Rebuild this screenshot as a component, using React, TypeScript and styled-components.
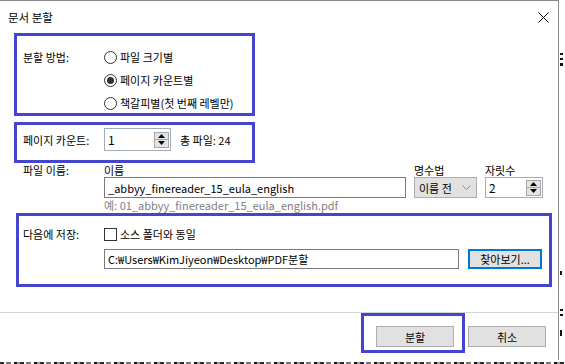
import React from "react";
import styled, { createGlobalStyle } from "styled-components";

const GlobalStyle = createGlobalStyle`
  html, body {
    margin: 0;
    padding: 0;
    background: #fff;
  }
  body {
    font-family: "Noto Sans CJK KR", "Noto Sans", sans-serif;
    font-size: 11px;
    color: #000;
  }
  * {
    box-sizing: border-box;
  }
`;

const Screen = styled.div`
  width: 565px;
  height: 364px;
  display: flex;
  flex-direction: column;
  overflow: hidden;
`;

const Top = styled.div`
  display: flex;
  height: 360px;
`;

const Dialog = styled.div`
  width: 559px;
  height: 360px;
  display: flex;
  flex-direction: column;
  background: #fff;
  border-top: 1px solid #8a8a8a;
  border-right: 1px solid #8a8a8a;
`;

const Backdrop = styled.div`
  flex: 1;
  display: flex;
  flex-direction: column;
  padding-left: 1px;
`;

const Mark = styled.span<{ $mt: number; $w?: number; $h?: number }>`
  display: block;
  margin-top: ${(p) => p.$mt}px;
  width: ${(p) => p.$w ?? 3}px;
  height: ${(p) => p.$h ?? 2}px;
  background: #111;
`;

const BottomStrip = styled.div`
  height: 4px;
  background: repeating-linear-gradient(
    90deg,
    #2a2a2a 0 4px,
    #fff 4px 6px,
    #777 6px 11px,
    #fff 11px 14px,
    #111 14px 17px,
    #9a9a9a 17px 20px
  );
  background-size: 100% 2px;
  background-repeat: no-repeat;
  background-position: 0 2px;
`;

const TitleBar = styled.div`
  height: 32px;
  display: flex;
  align-items: center;
  justify-content: space-between;
  padding: 0 9px 0 8px;
`;

const Title = styled.span`
  font-size: 11.5px;
  line-height: 14px;
`;

const CloseIcon = styled.svg`
  width: 11px;
  height: 11px;
`;

const Label = styled.span`
  line-height: 20px;
  white-space: nowrap;
`;

const Highlight = styled.div`
  border: 3px solid #4444cc;
`;

const MethodBox = styled(Highlight)`
  margin-left: 14px;
  width: 241px;
  height: 83px;
  padding: 11px 0 0 6px;
  display: grid;
  grid-template-columns: 81px auto;
  align-items: start;
`;

const RadioList = styled.div`
  display: flex;
  flex-direction: column;
  gap: 3px;
`;

const OptionRow = styled.label`
  height: 20px;
  display: flex;
  align-items: center;
  gap: 3px;
  white-space: nowrap;
`;

const RadioDot = styled.span<{ $on?: boolean }>`
  width: 13px;
  height: 13px;
  border: 1px solid #333;
  border-radius: 50%;
  background: #fff;
  display: inline-flex;
  align-items: center;
  justify-content: center;
  flex: none;

  &::after {
    content: "";
    width: 7px;
    height: 7px;
    border-radius: 50%;
    background: ${(p) => (p.$on ? "#333" : "transparent")};
  }
`;

const CheckBox = styled.span`
  width: 13px;
  height: 13px;
  border: 1px solid #333;
  background: #fff;
  flex: none;
`;

const CountBox = styled(Highlight)`
  margin: 6px 0 0 14px;
  width: 241px;
  height: 41px;
  padding: 0 0 6px 6px;
  display: flex;
  align-items: center;
`;

const LabelCell = styled.div`
  width: 81px;
  flex: none;
`;

const Total = styled.span`
  margin-left: 9px;
  white-space: nowrap;
`;

const SpinBox = styled.div<{ $w: number; $h: number }>`
  width: ${(p) => p.$w}px;
  height: ${(p) => p.$h}px;
  border: 1px solid #a3adb8;
  background: #fff;
  display: flex;
  align-items: center;
  justify-content: space-between;
  padding: 0 1px 0 3px;
`;

const SpinValue = styled.span`
  font-size: 12px;
`;

const SpinButtons = styled.div`
  display: flex;
  flex-direction: column;
`;

const SpinButton = styled.span`
  width: 15px;
  height: 8px;
  background: #e4e4e4;
  border: 1px solid #a6a6a6;
  display: flex;
  align-items: center;
  justify-content: center;

  & + & {
    border-top: none;
  }
`;

const Arrow = styled.svg`
  width: 7px;
  height: 4px;
`;

const FileSection = styled.div`
  height: 50px;
  padding-left: 23px;
  display: grid;
  grid-template-columns: 73px 302px 63px 58px;
  grid-template-rows: 14px 21px 15px;
  column-gap: 8px;
  align-items: center;
`;

const ColHead = styled.span`
  line-height: 14px;
  white-space: nowrap;
`;

const TextField = styled.div<{ $w?: number }>`
  width: ${(p) => (p.$w ? `${p.$w}px` : "100%")};
  height: 100%;
  border: 1px solid #7a7a7a;
  background: #fff;
  padding-left: 3px;
  display: flex;
  align-items: center;
  white-space: nowrap;
  overflow: hidden;
`;

const Select = styled.div`
  height: 100%;
  background: #e1e1e1;
  border: 1px solid #adadad;
  display: flex;
  align-items: center;
  justify-content: space-between;
  padding: 0 5px 0 4px;
  white-space: nowrap;
`;

const Chevron = styled.svg`
  width: 9px;
  height: 5px;
`;

const Hint = styled.span`
  grid-column: 2 / 5;
  color: #808080;
  line-height: 15px;
  white-space: nowrap;
`;

const SaveBox = styled(Highlight)`
  margin-left: 16px;
  width: 536px;
  height: 74px;
  padding: 10px 0 0 4px;
  display: grid;
  grid-template-columns: 81px 1fr;
  grid-template-rows: 16px 20px;
  row-gap: 7px;
  align-items: center;
`;

const PathRow = styled.div`
  grid-column: 2;
  display: flex;
  gap: 9px;
  height: 20px;
`;

const Button = styled.button`
  width: 78px;
  height: 21px;
  padding: 0;
  background: #e1e1e1;
  border: 1px solid #adadad;
  font: inherit;
  color: #000;
`;

const BrowseButton = styled(Button)`
  width: 74px;
  height: 20px;
  border: 2px solid #0078d7;
`;

const Footer = styled.div`
  margin-top: 25px;
  flex: 1;
  border-top: 1px solid #cfd6dc;
  display: flex;
  justify-content: flex-end;
  align-items: flex-start;
  padding-right: 12px;
`;

const ActionBox = styled(Highlight)`
  padding: 10px 8px 3px 12px;
  margin-right: 3px;
`;

const CancelButton = styled(Button)`
  margin-top: 13px;
`;

const Spinner = ({ value, w, h }: { value: string; w: number; h: number }) => (
  <SpinBox $w={w} $h={h}>
    <SpinValue>{value}</SpinValue>
    <SpinButtons>
      <SpinButton>
        <Arrow viewBox="0 0 7 4">
          <path d="M3.5 0 L7 4 L0 4 Z" fill="#000" />
        </Arrow>
      </SpinButton>
      <SpinButton>
        <Arrow viewBox="0 0 7 4">
          <path d="M0 0 L7 0 L3.5 4 Z" fill="#000" />
        </Arrow>
      </SpinButton>
    </SpinButtons>
  </SpinBox>
);

export default function App() {
  return (
    <Screen>
      <GlobalStyle />
      <Top>
        <Dialog>
          <TitleBar>
            <Title>문서 분할</Title>
            <CloseIcon viewBox="0 0 11 11">
              <path d="M0.5 0.5 L10.5 10.5 M10.5 0.5 L0.5 10.5" stroke="#000" strokeWidth="1" />
            </CloseIcon>
          </TitleBar>

          <MethodBox>
            <Label>분할 방법:</Label>
            <RadioList>
              <OptionRow>
                <RadioDot />
                파일 크기별
              </OptionRow>
              <OptionRow>
                <RadioDot $on />
                페이지 카운트별
              </OptionRow>
              <OptionRow>
                <RadioDot />
                책갈피별(첫 번째 레벨만)
              </OptionRow>
            </RadioList>
          </MethodBox>

          <CountBox>
            <LabelCell>페이지 카운트:</LabelCell>
            <Spinner value="1" w={67} h={23} />
            <Total>총 파일: 24</Total>
          </CountBox>

          <FileSection>
            <ColHead>파일 이름:</ColHead>
            <ColHead>이름</ColHead>
            <ColHead>명수법</ColHead>
            <ColHead>자릿수</ColHead>
            <span />
            <TextField>_abbyy_finereader_15_eula_english</TextField>
            <Select>
              이름 전
              <Chevron viewBox="0 0 9 5">
                <path d="M0.5 0.5 L4.5 4.5 L8.5 0.5" fill="none" stroke="#888" strokeWidth="1" />
              </Chevron>
            </Select>
            <Spinner value="2" w={58} h={21} />
            <span />
            <Hint>예: 01_abbyy_finereader_15_eula_english.pdf</Hint>
          </FileSection>

          <SaveBox>
            <Label>다음에 저장:</Label>
            <OptionRow>
              <CheckBox />
              소스 폴더와 동일
            </OptionRow>
            <PathRow>
              <TextField $w={355}>C:₩Users₩KimJiyeon₩Desktop₩PDF분할</TextField>
              <BrowseButton>찾아보기...</BrowseButton>
            </PathRow>
          </SaveBox>

          <Footer>
            <ActionBox>
              <Button>분할</Button>
            </ActionBox>
            <CancelButton>취소</CancelButton>
          </Footer>
        </Dialog>
        <Backdrop>
          <Mark $mt={53} />
          <Mark $mt={3} />
          <Mark $mt={3} $h={3} />
          <Mark $mt={205} $w={2} $h={4} />
          <Mark $mt={34} $h={2} />
          <Mark $mt={3} $h={2} />
          <Mark $mt={14} $w={2} $h={6} />
        </Backdrop>
      </Top>
      <BottomStrip />
    </Screen>
  );
}
